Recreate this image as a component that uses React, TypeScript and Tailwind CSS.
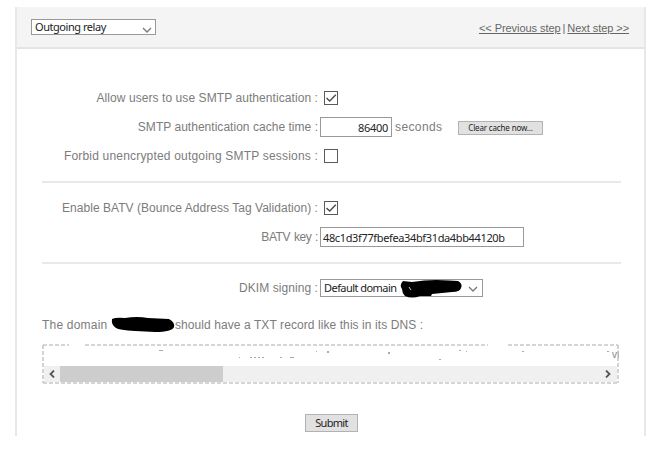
import type { ReactNode } from "react";

const ui = "font-['Noto_Sans','Open_Sans',sans-serif] text-[#222]";

function Row({ label, spacing, children }: { label: string; spacing: string; children: ReactNode }) {
  return (
    <div className="flex h-[29px] items-center">
      <div className={`w-[301px] shrink-0 text-right whitespace-nowrap ${spacing}`}>{label}</div>
      {children}
    </div>
  );
}

function Check({ checked = false }: { checked?: boolean }) {
  return (
    <div className="ml-[6px] h-[14px] w-[14px] border border-[#5a5a5a] bg-white">
      {checked && (
        <svg viewBox="0 0 12 12" className="block h-3 w-3" fill="none" stroke="#4c4c4c" strokeWidth="1.4">
          <path d="M1.5 6 L4.7 9 L10.8 2.8" />
        </svg>
      )}
    </div>
  );
}

function Chevron() {
  return (
    <svg viewBox="0 0 10 6" className="h-[6px] w-[10px] shrink-0" fill="none" stroke="#777" strokeWidth="1.3">
      <path d="M1 1 L5 5 L9 1" />
    </svg>
  );
}

export default function App() {
  return (
    <div className="h-[457px] w-[668px] overflow-hidden bg-white pt-[7px] pl-[15px] font-['Liberation_Sans',Arial,sans-serif] text-[12px] text-[#7c7c7c]">
      <div className="h-[429px] w-[631px] border-x-2 border-[#e8e8e8]">
        <header className="flex h-[42px] items-start justify-between border-b-2 border-[#e4e4e4] bg-[#f4f4f4] pt-3 pr-[15px] pl-[14px]">
          <div className={`flex h-4 w-[125px] items-center justify-between border border-[#999] bg-white pr-[3px] pl-[3px] text-[11px] tracking-[-0.45px] ${ui}`}>
            <span className="pt-px">Outgoing relay</span>
            <span className="pt-[5px]"><Chevron /></span>
          </div>
          <nav className="mt-px flex h-4 items-center gap-[2px] text-[11px] tracking-[-0.06px] whitespace-nowrap text-[#666]">
            <a className="underline">&lt;&lt; Previous step</a>
            <span>|</span>
            <a className="underline">Next step &gt;&gt;</a>
          </nav>
        </header>

        <main>
          <section className="pt-[34px]">
            <Row spacing="tracking-[0.075px]" label="Allow users to use SMTP authentication :">
              <Check checked />
            </Row>
            <Row spacing="tracking-[0.03px]" label="SMTP authentication cache time :">
              <div className={`ml-[2px] flex h-[20px] w-[72px] items-center justify-end border border-[#999] pt-[3px] pr-[3px] text-[11px] tracking-[-0.3px] ${ui}`}>86400</div>
              <span className="ml-[3px] w-[47px] tracking-[0.4px]">seconds</span>
              <div className={`mt-[2px] ml-[16px] flex h-[14px] w-[85px] items-center justify-center border border-[#b2b2b2] bg-[#e1e1e1] text-[8px] tracking-[-0.15px] whitespace-nowrap ${ui}`}>Clear cache now...</div>
            </Row>
            <Row spacing="tracking-[0.19px]" label="Forbid unencrypted outgoing SMTP sessions :">
              <Check />
            </Row>
          </section>
          <hr className="mt-[11px] mr-[23px] ml-[25px] border-t-2 border-[#e9e9e9]" />
          <section className="pt-[10px]">
            <Row spacing="tracking-[0.04px]" label="Enable BATV (Bounce Address Tag Validation) :">
              <Check checked />
            </Row>
            <Row spacing="tracking-[-0.45px] [word-spacing:1px]" label="BATV key :">
              <div className={`ml-[2px] flex h-[20px] w-[204px] items-center border border-[#999] pt-[3px] pl-[2px] text-[11px] tracking-[-0.36px] ${ui}`}>48c1d3f77fbefea34bf31da4bb44120b</div>
            </Row>
          </section>
          <hr className="mt-[11px] mr-[23px] ml-[25px] border-t-2 border-[#e9e9e9]" />
          <section className="pt-[9px]">
            <Row spacing="tracking-[0.07px]" label="DKIM signing :">
              <div className={`ml-[2px] flex h-[18px] w-[163px] items-center border border-[#999] pr-1 pl-[3px] text-[11px] tracking-[-0.55px] ${ui}`}>
                <span className="w-[76px] pt-[2px] whitespace-nowrap">Default domain</span>
                <svg viewBox="0 0 63 20" className="-my-2 h-5 w-[63px] shrink-0">
                  <path d="M3 3 L12 4 Q30 1 49 2.5 L58 3 Q63 6 61 10 Q60 14 52 14 L32 16 L31 18 L20 18 Q12 21 5 18 Q2 15 2 11 Q-1 7 3 3Z" fill="#000" />
                  <path d="M9 9 L11 12" stroke="#ccc" />
                </svg>
                <span className="ml-auto pt-[2px]"><Chevron /></span>
              </div>
            </Row>
            <p className="mt-[15px] ml-[25px] mb-px flex h-[15px] items-center whitespace-nowrap tracking-[0.08px]">
              <span className="w-[69px] tracking-[0.2px]">The domain</span>
              <svg viewBox="0 0 64 17" className="h-[17px] w-16 shrink-0">
                <path d="M1 3 Q5 1 14 2 Q26 0 37 2 L58 3 Q64 6 63 11 Q61 16 44 16 L24 15 Q8 14 5 12 Q0 9 1 3Z" fill="#000" />
              </svg>
              <span>should have a TXT record like this in its DNS :</span>
            </p>
            <div className="relative mt-[12px] ml-[25px] flex h-[40px] w-[577px] flex-col overflow-hidden p-[2px]">
              <svg viewBox="0 0 573 20" className="block h-5 w-[573px] shrink-0 overflow-visible" shapeRendering="crispEdges">
                <path d="M115 4h4v1h-4z M195 11h1v1h-1z M206 11h2v1h-2z M210 11h2v1h-2z M214 11h2v1h-2z M218 11h2v1h-2z M236 11h2v1h-2z M246 11h4v1h-4z M272 5h1v1h-1z M283 5h2v2h-2z M344 6h2v2h-2z M395 13h2v1h-2z M415 4h2v1h-2z M422 5h1v1h-1z M478 5h2v1h-2z M563 5h2v1h-2z" fill="#aaa" />
                <text x="568" y="12" fontSize="10" fill="#888">vt</text>
              </svg>
              <div className="flex h-4 items-center bg-[#f0f0f0] pl-[5px]">
                <svg viewBox="0 0 6 8" className="h-2 w-[6px]" fill="none" stroke="#555" strokeWidth="1.8"><path d="M5 .5 L1.5 4 L5 7.5" /></svg>
                <div className="ml-[5px] h-4 w-[163px] bg-[#cdcdcd]" />
                <svg viewBox="0 0 6 8" className="mr-[6px] ml-auto h-2 w-[6px]" fill="none" stroke="#555" strokeWidth="1.8"><path d="M1 .5 L4.5 4 L1 7.5" /></svg>
              </div>
              <svg viewBox="0 0 577 40" className="absolute inset-0 h-10 w-[577px]" fill="none" stroke="#c8c8c8" strokeWidth="1.6" strokeDasharray="4 2">
                <path d="M1 1 H27 M43 1 H446 M466 1 H576 M1 39 H576 M1 1 V39 M576 1 V39" />
              </svg>
            </div>
          </section>
          <div className={`mt-[30px] ml-[288px] flex h-[18px] w-[53px] items-center justify-center border border-[#b2b2b2] bg-[#e1e1e1] text-[11px] tracking-[-0.7px] ${ui}`}>Submit</div>
        </main>
      </div>
    </div>
  );
}
